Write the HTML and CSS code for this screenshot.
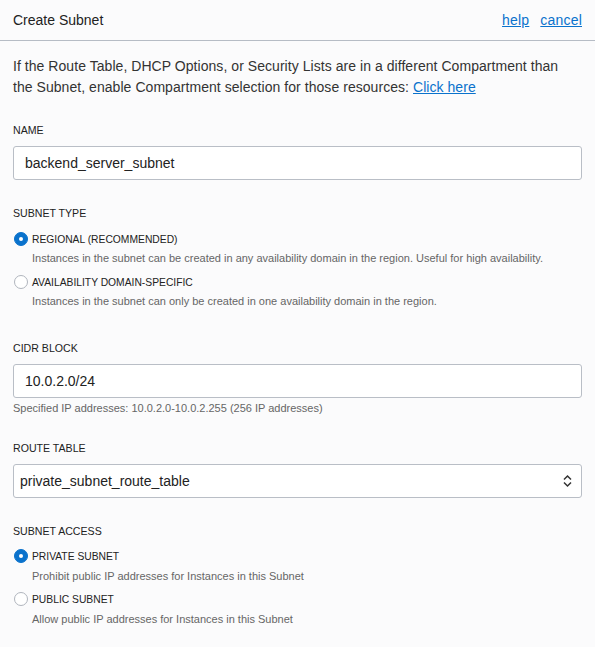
FILE: index.html
```html
<!DOCTYPE html>
<html>
<head>
<meta charset="utf-8">
<link rel="stylesheet" href="styles.css">
</head>
<body>
<div class="panel">
  <header class="header">
    <h1 class="title">Create Subnet</h1>
    <nav class="links"><a href="#">help</a><a href="#">cancel</a></nav>
  </header>
  <main class="content">
    <p class="intro">If the Route Table, DHCP Options, or Security Lists are in a different Compartment than the Subnet, enable Compartment selection for those resources: <a href="#">Click here</a></p>

    <div class="label label-name">NAME</div>
    <div class="input">backend_server_subnet</div>

    <div class="label label-gap">SUBNET TYPE</div>
    <div class="radio-group">
      <div class="radio-row first"><span class="radio checked"></span><span class="radio-text">REGIONAL (RECOMMENDED)</span></div>
      <div class="desc">Instances in the subnet can be created in any availability domain in the region. Useful for high availability.</div>
      <div class="radio-row"><span class="radio"></span><span class="radio-text">AVAILABILITY DOMAIN-SPECIFIC</span></div>
      <div class="desc">Instances in the subnet can only be created in one availability domain in the region.</div>
    </div>

    <div class="label label-cidr">CIDR BLOCK</div>
    <div class="input">10.0.2.0/24</div>
    <div class="helper">Specified IP addresses: 10.0.2.0-10.0.2.255 (256 IP addresses)</div>

    <div class="label label-gap">ROUTE TABLE</div>
    <div class="input select">
      <span>private_subnet_route_table</span>
      <svg class="chev" width="9" height="14" viewBox="0 0 9 14"><path d="M1 5.5 L4.5 2 L8 5.5 M1 8.5 L4.5 12 L8 8.5" fill="none" stroke="#333" stroke-width="1.5"/></svg>
    </div>

    <div class="label label-gap">SUBNET ACCESS</div>
    <div class="radio-group">
      <div class="radio-row first2"><span class="radio checked"></span><span class="radio-text">PRIVATE SUBNET</span></div>
      <div class="desc d2">Prohibit public IP addresses for Instances in this Subnet</div>
      <div class="radio-row r2"><span class="radio"></span><span class="radio-text">PUBLIC SUBNET</span></div>
      <div class="desc d2">Allow public IP addresses for Instances in this Subnet</div>
    </div>
  </main>
</div>
</body>
</html>
```

FILE: styles.css
```css
html, body {
  margin: 0;
  padding: 0;
  background: #fbfbfc;
}
body {
  font-family: "Liberation Sans", Arial, sans-serif;
  color: #333;
  width: 595px;
  height: 647px;
  overflow: hidden;
}
.header {
  height: 40px;
  border-bottom: 1px solid #b6bcc5;
  display: flex;
  align-items: center;
  justify-content: space-between;
  padding: 0 13px 0 13px;
}
.title {
  margin: 0;
  font-size: 14px;
  font-weight: normal;
  color: #222;
}
.links {
  display: flex;
  gap: 11px;
  font-size: 14px;
  letter-spacing: 0.2px;
}
.links a, .intro a {
  color: #0a72cc;
  text-decoration: underline;
}
.content {
  padding: 0 13px;
}
.intro {
  margin: 15px 0 0 0;
  max-width: 552px;
  font-size: 14px;
  line-height: 21px;
  letter-spacing: 0.05px;
  color: #333;
}
.label {
  font-size: 10.6px;
  line-height: 14px;
  color: #222;
}
.label-name { margin-top: 25px; }
.label-gap { margin-top: 26px; }
.label-cidr { margin-top: 32px; }
.input {
  margin-top: 9px;
  height: 32px;
  border: 1px solid #b9bec6;
  border-radius: 3px;
  background: #fff;
  box-sizing: content-box;
  padding: 0 11px;
  font-size: 14px;
  line-height: 32px;
  color: #222;
}
.select {
  display: flex;
  align-items: center;
  justify-content: space-between;
  padding: 0 6px 0 6px;
}
.chev {
  margin-right: 3px;
}
.helper {
  margin-top: 3px;
  font-size: 11px;
  line-height: 14px;
  color: #666;
}
.radio-row {
  display: flex;
  align-items: center;
  height: 16px;
  margin-top: 8px;
}
.radio-row.first { margin-top: 11px; }
.radio-row.first2 { margin-top: 10px; }
.radio-row.r2 { margin-top: 7px; }
.radio {
  width: 12px;
  height: 12px;
  border: 1px solid #b0b5bd;
  border-radius: 50%;
  background: #fff;
  margin-left: 1px;
  margin-right: 4px;
  display: inline-flex;
  align-items: center;
  justify-content: center;
  flex: none;
}
.radio.checked {
  background: #0a72cc;
  border-color: #0a72cc;
}
.radio.checked::after {
  content: "";
  width: 4px;
  height: 4px;
  border-radius: 50%;
  background: #fff;
}
.radio-text {
  font-size: 10.3px;
  color: #222;
}
.desc {
  margin-top: 3px;
  padding-left: 19px;
  font-size: 11px;
  line-height: 16px;
  color: #666;
}
.desc.d2 { margin-top: 4px; }
```
